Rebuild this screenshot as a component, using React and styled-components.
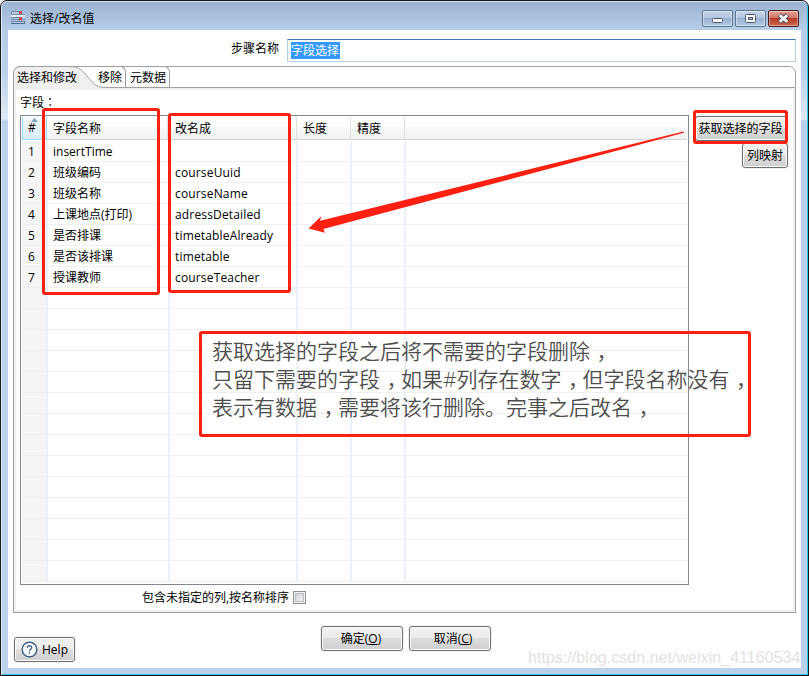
import React, { useState } from "react";
import styled, { createGlobalStyle } from "styled-components";

const rows = [
  { name: "insertTime", rename: "" },
  { name: "班级编码", rename: "courseUuid" },
  { name: "班级名称", rename: "courseName" },
  { name: "上课地点(打印)", rename: "adressDetailed" },
  { name: "是否排课", rename: "timetableAlready" },
  { name: "是否该排课", rename: "timetable" },
  { name: "授课教师", rename: "courseTeacher" },
];

const ROW_COUNT = 21;

const App = () => {
  const [sorted, setSorted] = useState(false);

  const tableRows = [];
  for (let i = 0; i < ROW_COUNT; i++) {
    tableRows.push(rows[i] || null);
  }

  return (
    <Desktop>
      <GlobalStyle />
      <Window>
        <TitleBar>
          <TitleIcon />
          <Title>选择/改名值</Title>
          <Controls>
            <ControlButton>
              <svg width="29" height="15">
                <rect x="9.5" y="7.5" width="10" height="4" rx="1" fill="#fff" stroke="#4c5566" />
              </svg>
            </ControlButton>
            <ControlButton>
              <svg width="29" height="15">
                <rect x="9.5" y="3.5" width="10" height="8" rx="1" fill="#fff" stroke="#4c5566" />
                <rect x="12.5" y="6.5" width="4" height="2" fill="#a9c0da" stroke="#4c5566" />
              </svg>
            </ControlButton>
            <ControlButton $close>
              <svg width="29" height="15">
                <path d="M10.5 4L18.5 11M18.5 4L10.5 11" stroke="#4a4d5c" strokeWidth="4.8" />
                <path d="M10.8 4.2L18.2 10.8M18.2 4.2L10.8 10.8" stroke="#fff" strokeWidth="2.8" />
              </svg>
            </ControlButton>
          </Controls>
        </TitleBar>

        <Client>
          <StepRow>
            <StepLabel>步骤名称</StepLabel>
            <StepInput>
              <Selection>字段选择</Selection>
            </StepInput>
          </StepRow>

          <TabFolder>
            <TabBar>
              <ActiveTab>
                <TabShape width="92" height="22">
                  <path
                    d="M0 22V6Q1 1 6 .5H56C66 .5 69 4 74 10C80 17 83 21.5 92 21.5V22Z"
                    fill="#f0f0f0"
                  />
                  <path
                    d="M.5 22V7Q1 1 7 .5H56C66 .5 69 4 74 10C80 17 83 21.5 92 21.5"
                    fill="none"
                    stroke="#a0a0a0"
                  />
                </TabShape>
                <span>选择和修改</span>
              </ActiveTab>
              <Tab $width={28}>移除</Tab>
              <Tab $width={44}>元数据</Tab>
            </TabBar>

            <TabContent>
              <FieldLabel>
                字段<Colon>：</Colon>
              </FieldLabel>
              <Main>
                <Table>
                  <HeaderRow>
                    <HeaderCell $active>
                      <SortArrow width="7" height="4">
                        <path d="M0 4L3.5 0L7 4Z" fill="#7ba5bf" />
                      </SortArrow>
                      #
                    </HeaderCell>
                    <HeaderCell>字段名称</HeaderCell>
                    <HeaderCell $indent={7}>改名成</HeaderCell>
                    <HeaderCell>长度</HeaderCell>
                    <HeaderCell>精度</HeaderCell>
                    <HeaderCell $last />
                  </HeaderRow>
                  {tableRows.map((row, index) => (
                    <Row key={index}>
                      <IndexCell>{row ? index + 1 : ""}</IndexCell>
                      <Cell>{row && row.name}</Cell>
                      <Cell $spacing={0.16}>{row && row.rename}</Cell>
                      <Cell />
                      <Cell />
                      <Cell $last />
                    </Row>
                  ))}
                </Table>
                <SideButtons>
                  <Button $width={93}>获取选择的字段</Button>
                  <Button $width={46} $indent={2}>列映射</Button>
                </SideButtons>
              </Main>
              <SortRow>
                <span>包含未指定的列,按名称排序</span>
                <CheckBox $checked={sorted} onClick={() => setSorted(!sorted)} />
              </SortRow>
            </TabContent>
          </TabFolder>

          <Footer>
            <HelpButton $width={61}>
              <svg width="17" height="17" viewBox="0 0 17 17">
                <circle cx="8.5" cy="8.5" r="7.3" fill="#fff" stroke="#3d6286" strokeWidth="1.5" />
                <path
                  d="M6.3 6.8C6.3 4.1 10.7 4.1 10.7 6.6C10.7 8.2 8.5 8.2 8.5 10.2M8.5 11.3V12.7"
                  fill="none"
                  stroke="#3d6286"
                  strokeWidth="1.4"
                />
              </svg>
              Help
            </HelpButton>
            <Actions>
              <Button $width={82}>
                确定(<u>O</u>)
              </Button>
              <Button $width={82} $indent={8}>
                取消(<u>C</u>)
              </Button>
            </Actions>
          </Footer>
        </Client>
      </Window>

      {/* annotations */}
      <Mark $x={42} $y={108} $w={118} $h={187} />
      <Mark $x={168} $y={113} $w={123} $h={180} />
      <Mark $x={693} $y={110} $w={95} $h={34} />
      <Mark $x={199} $y={331} $w={552} $h={106}>
        <Note>
          获取选择的字段之后将不需要的字段删除<Comma>，</Comma>
          <br />
          只留下需要的字段<Comma>，</Comma>如果#列存在数字<Comma>，</Comma>但字段名称没有<Comma>，</Comma>
          <br />
          表示有数据<Comma>，</Comma>需要将该行删除。完事之后改名<Comma>，</Comma>
        </Note>
      </Mark>
      <Arrow width="380" height="106" viewBox="306 129 380 106">
        <path d="M308.5 228.5L321.3 216.2L320 220.7L683.5 131.6L684 132.8L323.3 229L325 232.8Z" fill="#ff2012" />
      </Arrow>
      <Watermark>https://blog.csdn.net/weixin_41160534</Watermark>
    </Desktop>
  );
};

const TitleIcon = () => (
  <svg width="14" height="14" viewBox="0 0 14 14">
    <rect x=".5" y=".5" width="8" height="3" fill="#b9cbdc" stroke="#6f8da8" />
    <path d="M0 5H14" stroke="#fff" strokeWidth="1.4" />
    <path d="M9 3.5H13.5" stroke="#6f8da8" />
    <path d="M0 6.5H8M0 8.5H8M12 8.5H14M0 10.5H14" stroke="#6f8da8" />
    <path d="M0 12.5H14M13.5 10V13" stroke="#4c6f8d" />
    <path d="M8.2 .3L10.8 2.7M10.8 .3L8.2 2.7M8 6.3L11 9.2M11 6.3L8 9.2" stroke="#e0223c" strokeWidth="1.2" />
  </svg>
);

export default App;

// Styled Components
const GlobalStyle = createGlobalStyle`
  body {
    margin: 0;
    background: #fff;
  }
  * {
    box-sizing: border-box;
  }
`;

const Desktop = styled.div`
  position: relative;
  width: 809px;
  height: 676px;
  overflow: hidden;
  font-family: "Open Sans", "Noto Sans CJK SC", sans-serif;
  font-size: 12px;
  line-height: 16px;
  color: #000;
  background: linear-gradient(#fff 0 30px, #000 30px);
`;

const Window = styled.div`
  width: 809px;
  height: 676px;
  border: 1px solid #16181c;
  border-radius: 7px 7px 0 0;
  padding: 0 6px 6px;
  background: linear-gradient(#9ab3d0 0, #b6cde8 29px, #b9d1ea 70px, #dfe9f5 118px, #b9d1ea 120px);
  box-shadow: inset 1px 0 #e4eef9, inset -1px -1px #2fc9ea, inset 0 1px #d5e2f1;
`;

const TitleBar = styled.div`
  display: flex;
  align-items: center;
  height: 29px;
  padding: 4px 3px 0 4px;
`;

const Title = styled.div`
  flex: 1;
  margin: 2px 0 0 5px;
`;

const Controls = styled.div`
  display: flex;
  gap: 2px;
  margin-top: 1px;
`;

const ControlButton = styled.div`
  width: 31px;
  height: 17px;
  border: 1px solid ${(p) => (p.$close ? "#4b1a1f" : "#5f748f")};
  border-radius: 2px;
  background: ${(p) =>
    p.$close
      ? "linear-gradient(#e2a297, #cf7566 47%, #b83a26 50%, #cb6a50)"
      : "linear-gradient(#c3d5ea, #b0c6e0 47%, #98b2d0 50%, #b3cae3)"};
  box-shadow: inset 0 0 0 1px rgba(255, 255, 255, 0.4);

  svg {
    display: block;
  }
`;

const Client = styled.div`
  width: 793px;
  height: 638px;
  margin-left: 1px;
  background: #fff;
  padding-top: 9px;
`;

const StepRow = styled.div`
  display: flex;
  align-items: center;
  gap: 8px;
  height: 23px;
`;

const StepLabel = styled.label`
  width: 271px;
  padding-bottom: 4px;
  text-align: right;
`;

const StepInput = styled.div`
  width: 509px;
  height: 23px;
  padding: 2px 3px;
  border: 1px solid #b5cfe7;
  border-top-color: #3d7bad;
  border-radius: 1px;
`;

const Selection = styled.span`
  display: block;
  width: 49px;
  height: 17px;
  line-height: 18px;
  color: #fff;
  background: #3399ff;
`;

const TabFolder = styled.div`
  width: 783px;
  height: 547px;
  margin: 4px 0 0 5px;
`;

const TabBar = styled.div`
  display: flex;
  height: 22px;
  border: 1px solid #a0a0a0;
  border-radius: 7px 7px 0 0;
`;

const ActiveTab = styled.div`
  position: relative;
  width: 84px;
  padding: 3px 0 0 3px;

  span {
    position: relative;
  }
`;

const TabShape = styled.svg`
  position: absolute;
  left: -1px;
  top: -1px;
`;

const Tab = styled.div`
  width: ${(p) => p.$width}px;
  height: 21px;
  margin-top: -1px;
  padding: 3px 3px 0 0;
  border: 1px solid #a0a0a0;
  border-width: 1px 1px 0 0;
  border-radius: 0 6px 0 0;
  text-align: right;
  white-space: nowrap;
`;

const TabContent = styled.div`
  height: 525px;
  padding: 2px 7px 0 6px;
  border: 1px solid #a0a0a0;
  border-top: 0;
  box-shadow: inset 0 0 0 2px #f0f0f0;
`;

const FieldLabel = styled.div`
  height: 25px;
  padding-top: 5px;
`;

const Main = styled.div`
  display: flex;
  justify-content: space-between;
`;

const Table = styled.div`
  width: 669px;
  height: 470px;
  padding: 1px;
  border: 1px solid #828790;
`;

const Columns = styled.div`
  display: grid;
  grid-template-columns: 26px 122px 128px 54px 54px 281px;
  width: 665px;
`;

const HeaderRow = styled(Columns)`
  height: 24px;
  grid-template-columns: 25px 121px 129px 54px 54px 282px;
  background: linear-gradient(#fff 0 10px, #f7f8fa 10px, #f1f2f4 22px, #d5d5d5 22px 23px, #fff 23px);
`;

const HeaderCell = styled.div`
  position: relative;
  height: ${(p) => (p.$active ? 23 : 22)}px;
  padding: 4px 0 0 ${(p) => p.$indent || 6}px;
  border-right: ${(p) => (p.$last ? "0" : "1px solid #dedfe1")};

  ${(p) =>
    p.$active &&
    `
    padding: 3px 5px 0 0;
    text-align: center;
    background: linear-gradient(#f4fafd, #d9ecf6);
    border: 1px solid #96d9f9;
    border-top: 0;
  `}
`;

const SortArrow = styled.svg`
  position: absolute;
  left: 8px;
  top: 1px;
`;

const Row = styled(Columns)`
  height: 21px;
  background: linear-gradient(#fff 20px, #f0f0f0 20px);
`;

const Cell = styled.div`
  height: 21px;
  padding: 3px 0 0 5px;
  white-space: nowrap;
  letter-spacing: ${(p) => p.$spacing || 0}px;
  border-right: ${(p) => (p.$last ? "0" : "2px solid #ebf1fb")};
`;

const IndexCell = styled(Cell)`
  padding: 3px 5px 0 0;
  text-align: center;
  background: linear-gradient(#f5f5f5 20px, #eee 20px);
`;

const SideButtons = styled.div`
  display: flex;
  flex-direction: column;
  align-items: flex-end;
  gap: 2px;
  padding-top: 1px;
`;

const Button = styled.button`
  display: flex;
  align-items: center;
  justify-content: center;
  width: ${(p) => p.$width}px;
  height: 25px;
  padding: 1px 2px 0 ${(p) => p.$indent || 0}px;
  font: inherit;
  color: #000;
  white-space: nowrap;
  border: 1px solid #707070;
  border-radius: 3px;
  background: linear-gradient(#f2f2f2, #ebebeb 50%, #dddddd 50%, #cfcfcf);
  box-shadow: inset 0 0 0 1px #fafafa, 0 0 0 1px #f3f3f3;
`;

const HelpButton = styled(Button)`
  gap: 4px;
  margin-top: 24px;
  padding: 1px 0 0;

  svg {
    margin-top: -2px;
  }
`;

const SortRow = styled.div`
  display: flex;
  align-items: center;
  gap: 4px;
  height: 25px;
  padding-left: 122px;
`;

const CheckBox = styled.div`
  width: 13px;
  height: 13px;
  border: 1px solid #8e8f8f;
  box-shadow: inset 0 0 0 1px #f4f4f4, inset 0 0 0 2px #b9bec5;
  background: ${(p) => (p.$checked ? "#4b5f97" : "linear-gradient(135deg, #cbcfd5, #f6f6f6)")};
`;

const Footer = styled.div`
  display: flex;
  align-items: flex-start;
  padding-left: 6px;
`;

const Actions = styled.div`
  display: flex;
  gap: 6px;
  margin: 13px 0 0 246px;
`;

const Mark = styled.div`
  position: absolute;
  left: ${(p) => p.$x}px;
  top: ${(p) => p.$y}px;
  width: ${(p) => p.$w}px;
  height: ${(p) => p.$h}px;
  border: 3px solid #ff2012;
  border-radius: 3px;
`;

const Note = styled.div`
  padding: 3px 0 0 10px;
  font-size: 21px;
  font-weight: 350;
  line-height: 28px;
  white-space: nowrap;
  color: #4d4d4d;
`;

// half width comma, padded back to a full em
const Comma = styled.span`
  padding: 0 4px 0 6.5px;
  font-feature-settings: "halt";
`;

const Colon = styled.span`
  font-family: "Noto Sans CJK TC", sans-serif;
  line-height: 0;
`;

const Arrow = styled.svg`
  position: absolute;
  left: 306px;
  top: 129px;
`;

const Watermark = styled.div`
  position: absolute;
  left: 528px;
  top: 648px;
  font-family: "Liberation Sans", Arial, sans-serif;
  font-size: 16px;
  line-height: 20px;
  letter-spacing: 0.04px;
  color: #e2e2e2;
  white-space: nowrap;
`;
